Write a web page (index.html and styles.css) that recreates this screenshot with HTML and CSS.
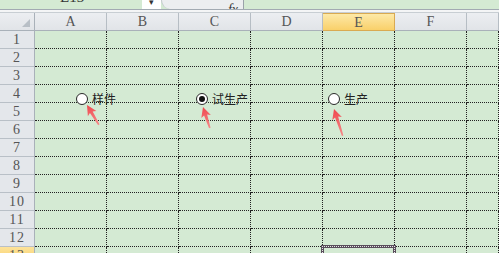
FILE: index.html
```html
<!DOCTYPE html>
<html lang="zh-CN">

<head>
  <meta charset="UTF-8">
  <meta name="viewport" content="width=device-width, initial-scale=1.0">
  <title>Sheet1</title>
  <link rel="stylesheet" href="styles.css">
</head>

<body>
  <div class="formula-bar">
    <div class="name-box"><span>E13</span></div>
    <div class="name-drop">&#9662;</div>
    <div class="fx-box"><i>fx</i></div>
  </div>
  <div class="bar-sep"></div>

  <div class="sheet">
    <div class="corner"></div>
    <div class="col-head">A</div>
    <div class="col-head">B</div>
    <div class="col-head">C</div>
    <div class="col-head">D</div>
    <div class="col-head active">E</div>
    <div class="col-head">F</div>
    <div class="col-head"></div>
  </div>

  <!-- 选项按钮 -->
  <label class="opt opt-1"><span class="radio"></span>样件</label>
  <label class="opt opt-2"><span class="radio checked"></span>试生产</label>
  <label class="opt opt-3"><span class="radio"></span>生产</label>

  <svg class="arrows" width="499" height="253" viewBox="0 0 499 253">
    <defs>
      <linearGradient id="red" x1="0" y1="0" x2="0" y2="1">
        <stop offset="0" stop-color="#f0484e" />
        <stop offset="1" stop-color="#f58a8a" />
      </linearGradient>
    </defs>
    <path transform="translate(87 105) rotate(-31)" d="M0,0 L5,10 L1.6,8.4 L0.8,23 L-0.8,23 L-1.6,8.4 L-5,10 Z" fill="url(#red)" />
    <path transform="translate(203 107) rotate(-18)" d="M0,0 L5,10 L1.6,8.4 L0.8,22 L-0.8,22 L-1.6,8.4 L-5,10 Z" fill="url(#red)" />
    <path transform="translate(334 109) rotate(-18)" d="M0,0 L5,10 L1.6,8.4 L0.8,28 L-0.8,28 L-1.6,8.4 L-5,10 Z" fill="url(#red)" />
  </svg>

  <script>
    // 行 1..13
    const sheet = document.querySelector('.sheet');
    for (let r = 1; r <= 13; r++) {
      const head = document.createElement('div');
      head.className = 'row-head' + (r == 13 ? ' active' : '');
      head.textContent = r;
      sheet.appendChild(head);
      for (let c = 0; c < 7; c++) {
        const cell = document.createElement('div');
        cell.className = 'cell' + (r == 13 && c == 4 ? ' sel' : '');
        sheet.appendChild(cell);
      }
    }
  </script>
</body>

</html>
```

FILE: styles.css
```css
html,
body {
  margin: 0;
  height: 100%;
  overflow: hidden;
}

body {
  position: relative;
  background-color: #d4ead3;
  font-family: "Liberation Serif", serif;
  color: #444;
}

.formula-bar {
  display: flex;
  height: 9px;
  overflow: hidden;
}

.name-box {
  width: 142px;
  position: relative;
}

.name-box span {
  position: absolute;
  left: 60px;
  top: -10px;
  font-size: 15px;
  line-height: 15px;
  color: #333;
}

.name-drop {
  width: 19px;
  background-color: #fff;
  font-size: 9px;
  line-height: 4px;
  text-align: center;
  color: #333;
}

.fx-box {
  width: 76px;
  background-color: #eceef0;
  border-radius: 0 0 0 14px;
  border-right: 1px solid #9aa2aa;
  border-left: 1px solid #c4c9ce;
  text-align: right;
  padding-right: 5px;
}

.fx-box i {
  font-size: 14px;
  line-height: 6px;
  color: #333;
}

.bar-sep {
  height: 2px;
  border-top: 1px solid #a2aab2;
  background-color: #f4f5f6;
  border-bottom: 1px solid #c8ced3;
}

.sheet {
  display: grid;
  grid-template-columns: 35px repeat(6, 72px) 1fr;
  grid-auto-rows: 18px;
}

.corner,
.col-head,
.row-head {
  box-sizing: border-box;
  background: linear-gradient(#eceef1, #e1e4e8);
  font-size: 14px;
  line-height: 18px;
  text-align: center;
  color: #555;
}

.corner {
  position: relative;
  border-right: 1px solid #a9b1b9;
  border-bottom: 1px solid #a9b1b9;
}

.corner:after {
  content: '';
  position: absolute;
  right: 4px;
  bottom: 3px;
  border-left: 8px solid transparent;
  border-bottom: 8px solid #b8bfc6;
}

.col-head {
  border-right: 1px solid #b6bdc4;
  border-bottom: 1px solid #a9b1b9;
}

.col-head.active {
  background: linear-gradient(#fde9a8, #f9d06a);
  border: 1px solid #d9aa52;
  border-left: none;
}

.row-head {
  background: #e4e7eb;
  border-right: 1px solid #a9b1b9;
  border-bottom: 1px solid #b9c0c7;
  letter-spacing: 1px;
}

.row-head.active {
  background: linear-gradient(#fde39a, #f8cc62);
  border-bottom-color: #d9aa52;
}

.cell {
  box-sizing: border-box;
  border-right: 1px dotted #222;
  border-bottom: 1px dotted #222;
}

.cell.sel {
  position: relative;
}

.cell.sel:after {
  content: '';
  position: absolute;
  left: -2px;
  top: -2px;
  right: -2px;
  bottom: -2px;
  border: 3px solid #5a4e5c;
  outline: 1px dotted #e8e8e8;
  outline-offset: -2px;
}

.opt {
  position: absolute;
  top: 92px;
  display: flex;
  align-items: center;
  gap: 4px;
  font-family: "Noto Sans CJK SC", sans-serif;
  font-size: 12px;
  line-height: 14px;
  color: #222;
}

.opt-1 {
  left: 76px;
}

.opt-2 {
  left: 196px;
}

.opt-3 {
  left: 328px;
}

.radio {
  box-sizing: border-box;
  width: 12px;
  height: 12px;
  border: 1px solid #2a2a2a;
  border-radius: 50%;
  background-color: #fff;
  display: flex;
  align-items: center;
  justify-content: center;
}

.radio.checked:before {
  content: '';
  width: 6px;
  height: 6px;
  border-radius: 50%;
  background-color: #111;
}

.arrows {
  position: absolute;
  left: 0;
  top: 0;
  pointer-events: none;
}
```
